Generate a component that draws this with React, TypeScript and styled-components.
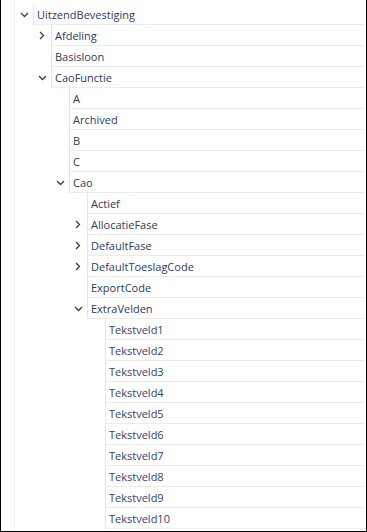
import React from "react";
import styled, { createGlobalStyle } from "styled-components";

type State = "open" | "closed" | "leaf";

interface Node {
  label: string;
  level: number;
  state: State;
}

const NODES: Node[] = [
  { label: "UitzendBevestiging", level: 0, state: "open" },
  { label: "Afdeling", level: 1, state: "closed" },
  { label: "Basisloon", level: 1, state: "leaf" },
  { label: "CaoFunctie", level: 1, state: "open" },
  { label: "A", level: 2, state: "leaf" },
  { label: "Archived", level: 2, state: "leaf" },
  { label: "B", level: 2, state: "leaf" },
  { label: "C", level: 2, state: "leaf" },
  { label: "Cao", level: 2, state: "open" },
  { label: "Actief", level: 3, state: "leaf" },
  { label: "AllocatieFase", level: 3, state: "closed" },
  { label: "DefaultFase", level: 3, state: "closed" },
  { label: "DefaultToeslagCode", level: 3, state: "closed" },
  { label: "ExportCode", level: 3, state: "leaf" },
  { label: "ExtraVelden", level: 3, state: "open" },
  ...Array.from({ length: 10 }, (_, i) => ({
    label: `Tekstveld${i + 1}`,
    level: 4,
    state: "leaf" as State,
  })),
];

const INDENT = 18;

const GlobalStyle = createGlobalStyle`
  html, body {
    margin: 0;
    padding: 0;
    background: #fff;
  }
`;

const Frame = styled.div`
  width: 367px;
  height: 532px;
  box-sizing: border-box;
  border-left: 1px solid #000;
  border-right: 1px solid #000;
  border-bottom: 1px solid #000;
  display: flex;
  background: #fff;
  overflow: hidden;
  font-family: "Open Sans", "Noto Sans", sans-serif;
  font-size: 11px;
`;

const Indicator = styled.div`
  width: 13px;
  flex: none;
  border-right: 1px solid #f0f0f0;
`;

const Tree = styled.div`
  flex: 1;
  padding-top: 4px;
  display: flex;
  flex-direction: column;
`;

const Row = styled.div<{ $level: number }>`
  display: flex;
  height: 21px;
  padding-left: ${(p) => p.$level * INDENT}px;
`;

const Expander = styled.div`
  width: 18px;
  flex: none;
  display: flex;
  align-items: center;
  justify-content: center;
  color: #3c3c3c;
`;

const Cell = styled.div<{ $deep: boolean }>`
  flex: 1;
  display: flex;
  align-items: center;
  padding-left: 3px;
  border-left: 1px solid #e6e6e6;
  border-bottom: 1px solid #ececec;
  color: ${(p) => (p.$deep ? "#34427a" : "#2e3a63")};
  white-space: nowrap;
`;

const Chevron = ({ state }: { state: State }) => {
  if (state === "leaf") return null;
  if (state === "open")
    return (
      <svg width="9" height="6" viewBox="0 0 9 6">
        <polyline points="1,1 4.5,4.5 8,1" fill="none" stroke="currentColor" strokeWidth="1.3" />
      </svg>
    );
  return (
    <svg width="6" height="9" viewBox="0 0 6 9">
      <polyline points="1,1 4.5,4.5 1,8" fill="none" stroke="currentColor" strokeWidth="1.3" />
    </svg>
  );
};

export default function App() {
  return (
    <>
      <GlobalStyle />
      <Frame>
        <Indicator />
        <Tree>
          {NODES.map((n) => (
            <Row key={n.label} $level={n.level}>
              <Expander>
                <Chevron state={n.state} />
              </Expander>
              <Cell $deep={n.level === 4}>{n.label}</Cell>
            </Row>
          ))}
        </Tree>
      </Frame>
    </>
  );
}
